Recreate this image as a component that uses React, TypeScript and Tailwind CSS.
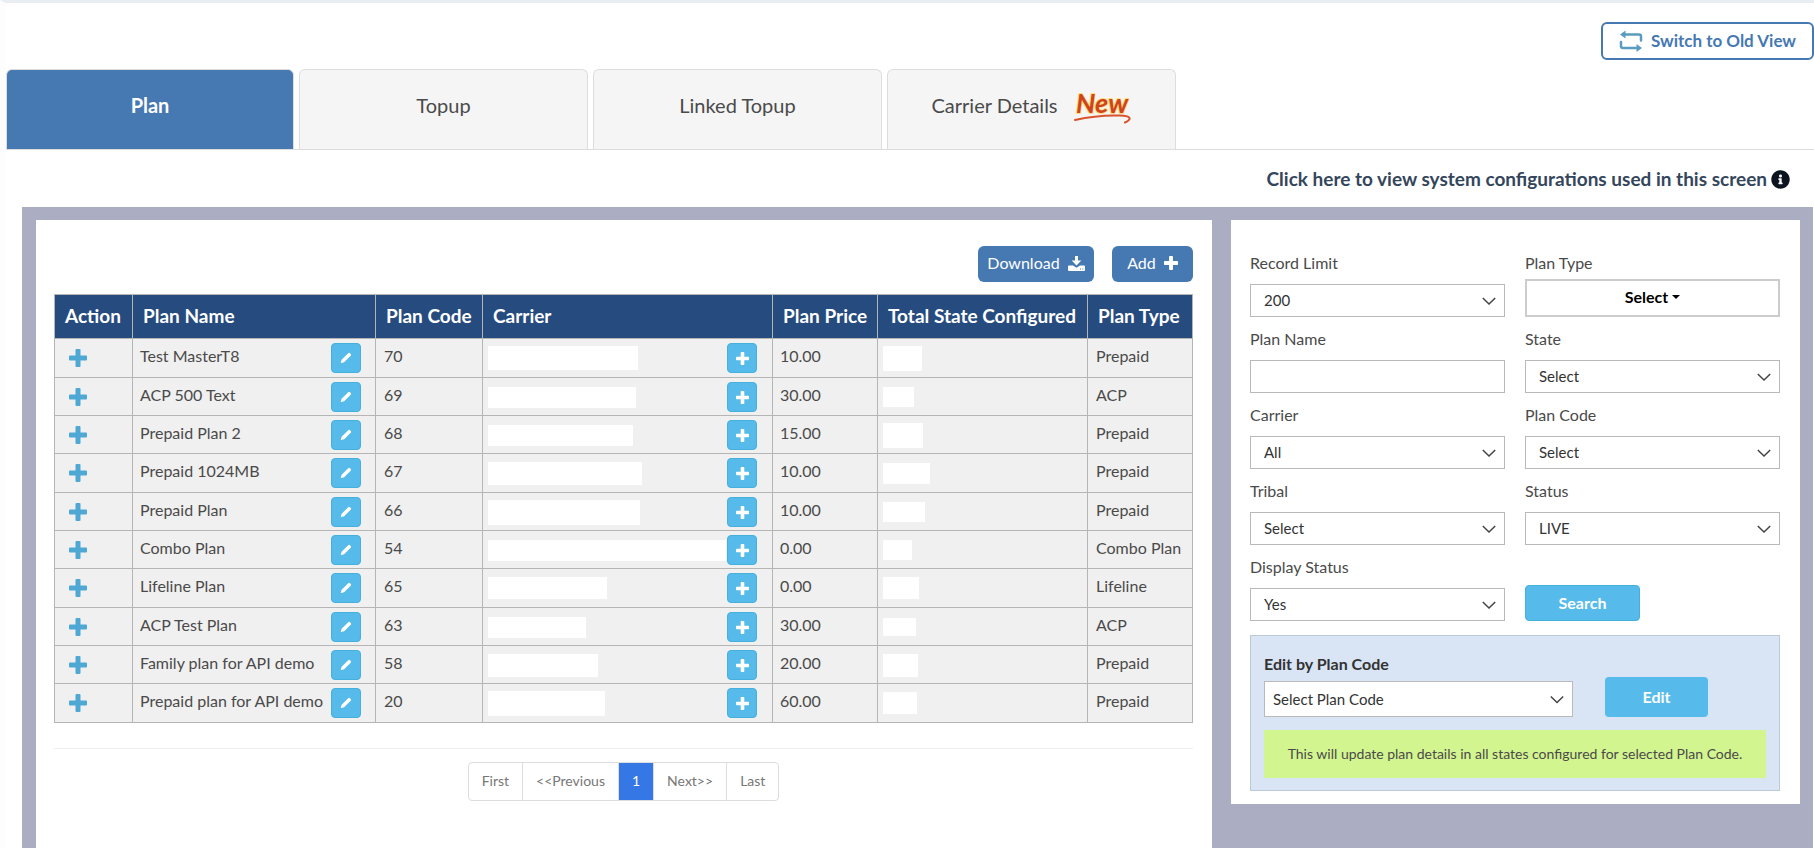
import type { ReactNode } from 'react';
import { FaInfoCircle } from 'react-icons/fa';

const plans = [
  { name: 'Test MasterT8', code: '70', price: '10.00', type: 'Prepaid', carrier: 'w-[150px] h-[24px]', states: 'w-[39px] h-[25px]' },
  { name: 'ACP 500 Text', code: '69', price: '30.00', type: 'ACP', carrier: 'w-[148px] h-[21px]', states: 'w-[31px] h-[20px]' },
  { name: 'Prepaid Plan 2', code: '68', price: '15.00', type: 'Prepaid', carrier: 'w-[145px] h-[21px]', states: 'w-[40px] h-[25px]' },
  { name: 'Prepaid 1024MB', code: '67', price: '10.00', type: 'Prepaid', carrier: 'w-[154px] h-[23px]', states: 'w-[47px] h-[21px]' },
  { name: 'Prepaid Plan', code: '66', price: '10.00', type: 'Prepaid', carrier: 'w-[152px] h-[25px]', states: 'w-[42px] h-[20px]' },
  { name: 'Combo Plan', code: '54', price: '0.00', type: 'Combo Plan', carrier: 'w-[238px] h-[21px]', states: 'w-[29px] h-[20px]' },
  { name: 'Lifeline Plan', code: '65', price: '0.00', type: 'Lifeline', carrier: 'w-[119px] h-[22px]', states: 'w-[36px] h-[22px]' },
  { name: 'ACP Test Plan', code: '63', price: '30.00', type: 'ACP', carrier: 'w-[98px] h-[21px]', states: 'w-[33px] h-[18px]' },
  { name: 'Family plan for API demo', code: '58', price: '20.00', type: 'Prepaid', carrier: 'w-[110px] h-[23px]', states: 'w-[35px] h-[23px]' },
  { name: 'Prepaid plan for API demo', code: '20', price: '60.00', type: 'Prepaid', carrier: 'w-[117px] h-[25px]', states: 'w-[34px] h-[22px]' },
];

const columns = [
  { label: 'Action', width: 'w-[78px]' },
  { label: 'Plan Name', width: 'w-[243px]' },
  { label: 'Plan Code', width: 'w-[107px]' },
  { label: 'Carrier', width: '' },
  { label: 'Plan Price', width: 'w-[105px]' },
  { label: 'Total State Configured', width: 'w-[210px]' },
  { label: 'Plan Type', width: 'w-[105px]' },
];

const pages = ['First', '<<Previous', '1', 'Next>>', 'Last'];

function PlusIcon({ className }: { className: string }) {
  return (
    <svg viewBox="0 0 18 18" className={className} fill="currentColor" aria-hidden="true">
      <path d="M7.500 0h3q1 0 1 1v5.500h5.500q1 0 1 1v3q0 1-1 1h-5.500v5.500q0 1-1 1h-3q-1 0-1-1v-5.500h-5.500q-1 0-1-1v-3q0-1 1-1h5.500v-5.500q0-1 1-1z" />
    </svg>
  );
}

function PencilIcon() {
  return (
    <svg viewBox="0 0 12 12" className="h-3 w-3" fill="currentColor" aria-hidden="true">
      <path d="M8.200 1.200q.9-.9 1.800 0l.7.7q.9.900 0 1.800l-6.600 6.600-2.900.8q-.5 0-.4-.5l.8-2.800z" />
    </svg>
  );
}

function DownloadIcon() {
  return (
    <svg viewBox="0 0 17 15" className="h-[15px] w-[17px]" fill="currentColor" aria-hidden="true">
      <path d="M7 0h3v4.500h3.300L8.500 9.500 3.700 4.500H7z" />
      <path fillRule="evenodd" d="M1 9.500h4l3.500 2.300L12 9.500h4q1 0 1 1V14q0 1-1 1H1q-1 0-1-1v-3.500q0-1 1-1zM12 12.500v1h1v-1zM14.300 12.500v1h1v-1z" />
    </svg>
  );
}

function SwitchIcon() {
  return (
    <svg viewBox="0 0 24 22" className="h-[22px] w-6 text-[#5a9cc0]" aria-hidden="true">
      <path d="M4 4.500h16q2 0 2 2v4" fill="none" stroke="currentColor" strokeWidth="2.500" strokeLinecap="round" />
      <path d="M20 18H4q-2 0-2-2v-4" fill="none" stroke="currentColor" strokeWidth="2.500" strokeLinecap="round" />
      <path d="M1 4.500L6.500 0.500v8zM23 18l-5.500-4v8z" fill="currentColor" />
    </svg>
  );
}

function NewBadge() {
  return (
    <svg viewBox="0 0 58 42" className="h-[42px] w-[58px]" role="img" aria-label="New">
      <text x="2" y="29" fontFamily="Lato, sans-serif" fontSize="27" fontWeight="700" fontStyle="italic" fill="#cf4420" stroke="#ffdc78" strokeWidth="2" strokeLinejoin="round" paintOrder="stroke">
        New
      </text>
      <path d="M1 36C16 32.500 32 31 46 31.500c10 .4 13 3 5 7" fill="none" stroke="#d9532c" strokeWidth="2" strokeLinecap="round" />
    </svg>
  );
}

function Field({ id, label, children }: { id: string; label: string; children: ReactNode }) {
  return (
    <div className="flex h-[70px] flex-col justify-between">
      <label htmlFor={id} className="pt-0.5 leading-7">{label}</label>
      {children}
    </div>
  );
}

function Select({ id, value, className = 'h-[33px] pl-[13px]' }: { id: string; value: string; className?: string }) {
  return (
    <div className="relative">
      <select id={id} className={`block w-full appearance-none border border-[#b9b9b9] bg-white pr-8 text-[15px] text-[#333] ${className}`}>
        <option>{value}</option>
      </select>
      <svg viewBox="0 0 14 8" className="pointer-events-none absolute top-0 right-[9px] h-full w-[14px]" fill="none" stroke="#444" strokeWidth="1.500" aria-hidden="true">
        <path d="M.8 1.500l6.200 6 6.200-6" />
      </svg>
    </div>
  );
}

export default function App() {
  return (
    <div className="flex min-h-screen flex-col border-t-[3px] border-l-[6px] border-t-[#e9eef3] border-l-[#fdfdfd] bg-white font-['Lato',sans-serif] text-base text-[#4a4a4a]">
      <div className="flex h-[66px] justify-end pt-[19px]">
        <button className="flex h-[38px] items-center gap-2 rounded-md border-2 border-[#4678b2] bg-white px-4 text-[17px] font-bold text-[#4678b2]">
          <SwitchIcon />
          Switch to Old View
        </button>
      </div>

      {/* Tabs */}
      <nav className="flex h-[81px] gap-[5px] border-b border-[#ddd] text-xl">
        <button className="w-[288px] rounded-t-md border border-b-0 border-[#ddd] bg-[#4678b2] pb-2.5 font-bold text-white">Plan</button>
        <button className="w-[289px] rounded-t-md border border-b-0 border-[#ddd] bg-[#f5f5f5] pb-2.5">Topup</button>
        <button className="w-[289px] rounded-t-md border border-b-0 border-[#ddd] bg-[#f5f5f5] pb-2.5">Linked Topup</button>
        <button className="flex w-[289px] items-center justify-center gap-4 rounded-t-md border border-b-0 border-[#ddd] bg-[#f5f5f5] pb-2.5">
          Carrier Details
          <NewBadge />
        </button>
      </nav>

      <div className="flex h-[57px] items-center justify-end pt-0.5 pr-6">
        <a href="#" className="flex items-center gap-1 text-[19px] font-bold text-[#34465c]">
          Click here to view system configurations used in this screen
          <FaInfoCircle className="text-[#0c1420]" />
        </a>
      </div>

      <main className="mr-px ml-4 flex flex-1 items-stretch gap-[19px] bg-[#abaec2] pt-[13px] pr-[13px] pl-[14px]">
        {/* Plan list */}
        <section className="min-w-0 flex-1 bg-white pt-[26px] pr-[19px] pl-[18px]">
          <div className="flex justify-end gap-[18px]">
            <button className="flex h-9 w-[116px] items-center justify-center gap-2 rounded-md bg-[#4678b2] pb-0.5 text-white">
              Download <DownloadIcon />
            </button>
            <button className="flex h-9 w-[81px] items-center justify-center gap-2 rounded-md bg-[#4678b2] pb-0.5 text-white">
              Add <PlusIcon className="h-[14px] w-[14px]" />
            </button>
          </div>

          <table className="mt-3 w-full table-fixed border-collapse border border-[#b5b5b5]">
            <thead>
              <tr className="h-11 bg-[#264b7f] text-left text-[19px] text-white">
                {columns.map((c) => (
                  <th key={c.label} className={`border border-[#b5b5b5] pl-[10px] font-bold whitespace-nowrap ${c.width}`}>{c.label}</th>
                ))}
              </tr>
            </thead>
            <tbody>
              {plans.map((p) => (
                <tr key={p.code} className="h-[38px] bg-[#f0f0f0] align-top leading-[26px] nth-[3n+1]:h-[39px]">
                  <td className="border border-[#b5b5b5] pt-1 pl-[14px]">
                    <button className="flex h-[30px] items-center text-[#4fa8d4]" aria-label="Expand"><PlusIcon className="h-[18px] w-[18px]" /></button>
                  </td>
                  <td className="border border-[#b5b5b5] pt-1 pr-[14px] pl-[7px]">
                    <div className="flex justify-between">
                      <span className="whitespace-nowrap">{p.name}</span>
                      <button className="flex h-[30px] w-[30px] shrink-0 items-center justify-center rounded border border-[#46b0dd] bg-[#56bbea] text-white" aria-label="Edit plan">
                        <PencilIcon />
                      </button>
                    </div>
                  </td>
                  <td className="border border-[#b5b5b5] pt-1 pl-2">{p.code}</td>
                  <td className="border border-[#b5b5b5] pt-1 pr-[15px] pl-[5px]">
                    <div className="flex items-center justify-between">
                      <div className={`bg-white ${p.carrier}`} />
                      <button className="flex h-[30px] w-[30px] shrink-0 items-center justify-center rounded border border-[#46b0dd] bg-[#56bbea] text-white" aria-label="Add carrier">
                        <PlusIcon className="h-[13px] w-[13px]" />
                      </button>
                    </div>
                  </td>
                  <td className="border border-[#b5b5b5] pt-1 pl-[7px]">{p.price}</td>
                  <td className="border border-[#b5b5b5] pt-1 pl-[5px]">
                    <div className="flex h-[30px] items-center">
                      <div className={`bg-white ${p.states}`} />
                    </div>
                  </td>
                  <td className="border border-[#b5b5b5] pt-1 pl-2 whitespace-nowrap">{p.type}</td>
                </tr>
              ))}
            </tbody>
          </table>

          <hr className="mt-[25px] mb-[13px] border-[#eee]" />

          <div className="flex justify-center">
            <div className="flex h-[39px] divide-x divide-[#ddd] overflow-hidden rounded border border-[#ddd] text-sm text-[#777]">
              {pages.map((label) => (
                <button key={label} className={label === '1' ? 'bg-[#3577e5] px-[13px] pb-0.5 text-white' : 'px-[13px] pb-0.5'}>{label}</button>
              ))}
            </div>
          </div>
        </section>

        {/* Filters */}
        <aside className="w-[569px] shrink-0 self-start bg-white pt-[27px] pr-5 pb-[13px] pl-[19px]">
          <div className="grid grid-cols-2 gap-x-5 gap-y-1.5">
            <Field id="limit" label="Record Limit"><Select id="limit" value="200" /></Field>
            <Field id="type" label="Plan Type">
              <button id="type" className="flex h-[38px] items-center justify-center gap-1 border-2 border-[#ccc] bg-white pb-0.5 font-bold text-black">
                Select
                <svg viewBox="0 0 8 4" className="h-1 w-2" aria-hidden="true"><path d="M0 0h8l-4 4z" /></svg>
              </button>
            </Field>
            <Field id="name" label="Plan Name"><input id="name" type="text" className="h-[33px] border border-[#b9b9b9] px-3" /></Field>
            <Field id="state" label="State"><Select id="state" value="Select" /></Field>
            <Field id="carrier" label="Carrier"><Select id="carrier" value="All" /></Field>
            <Field id="code" label="Plan Code"><Select id="code" value="Select" /></Field>
            <Field id="tribal" label="Tribal"><Select id="tribal" value="Select" /></Field>
            <Field id="status" label="Status"><Select id="status" value="LIVE" /></Field>
            <Field id="display" label="Display Status"><Select id="display" value="Yes" /></Field>
            <div className="flex items-end">
              <button className="h-9 w-[115px] rounded border border-[#46b0dd] bg-[#56bbea] font-bold text-white">Search</button>
            </div>
          </div>

          <div className="mt-[14px] border border-[#bccad6] bg-[#d9e5f4] px-[13px] pt-[15px] pb-3">
            <div className="flex items-end gap-8">
              <div className="w-[309px]">
                <label htmlFor="edit-code" className="mb-1 block leading-[26px] font-bold text-[#333]">Edit by Plan Code</label>
                <Select id="edit-code" value="Select Plan Code" className="h-9 pl-2" />
              </div>
              <button className="h-10 w-[103px] rounded bg-[#56bbea] font-bold text-white">Edit</button>
            </div>
            <p className="mt-[13px] bg-[#d3f58f] text-center text-sm leading-[48px]">This will update plan details in all states configured for selected Plan Code.</p>
          </div>
        </aside>
      </main>
    </div>
  );
}
